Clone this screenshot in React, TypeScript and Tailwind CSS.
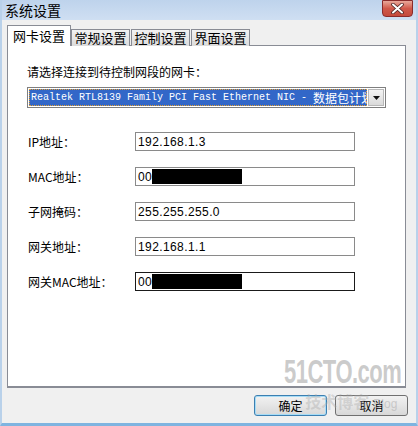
import React from "react";

const CJK = "font-['Noto_Sans_CJK_SC','Liberation_Sans',sans-serif]";
const SANS = "font-['Liberation_Sans',sans-serif]";
const MONO = "font-['Liberation_Mono','Noto_Sans_CJK_SC',monospace]";

function Row({ label, value, mask, dark }: { label: string; value: string; mask?: boolean; dark?: boolean }) {
  return (
    <div className="flex items-center h-[19px]">
      <div className={`w-[107px] text-[12px] text-black leading-none ${CJK}`}>{label}</div>
      <div
        className={`relative w-[220px] h-[19px] bg-white border flex items-center pl-[2px] text-[12px] text-black tracking-[0.4px] ${SANS} ${dark ? "border-[#1a1a1a]" : "border-[#8a8a8a]"}`}
      >
        {value}
        {mask && <div className="absolute top-[1px] bottom-[1px] left-[16px] w-[90px] bg-black" />}
      </div>
    </div>
  );
}

function Tab({ label, first }: { label: string; first?: boolean }) {
  return (
    <div
      className={`h-[17px] w-[59px] bg-gradient-to-b from-[#f2f2f2] to-[#dcdcdc] border border-[#898c95] border-b-0 flex items-center justify-center text-[13px] ${CJK} ${first ? "" : "ml-[1px]"}`}
    >
      {label}
    </div>
  );
}

export default function App() {
  return (
    <div className="relative w-[418px] h-[426px] bg-[#f0f0f0] flex flex-col overflow-hidden border-l-2 border-r-2 border-[#b9d1ea] border-b-[3px] border-b-[#7fb4e0]">
      {/* Title bar */}
      <div className="h-[20px] bg-gradient-to-b from-[#bed3ec] to-[#cfdff2] flex items-start justify-between shrink-0">
        <div className={`pl-[3px] pt-[1px] text-[14px] leading-[18px] text-black ${CJK}`}>系统设置</div>
        <div className="mr-[3px] w-[31px] h-[17px] rounded-b-[4px] border border-[#8a2b2b] bg-gradient-to-b from-[#e8a89b] via-[#d0584a] to-[#c44a3c] flex items-center justify-center">
          <svg width="13" height="11" viewBox="0 0 13 11">
            <path d="M2 1.5 L11 9.5 M11 1.5 L2 9.5" stroke="#4a2222" strokeWidth="3.6" strokeLinecap="round" />
            <path d="M2 1.5 L11 9.5 M11 1.5 L2 9.5" stroke="#ffffff" strokeWidth="2" strokeLinecap="round" />
          </svg>
        </div>
      </div>

      {/* Body */}
      <div className="flex-1 flex flex-col pl-[5px] pr-[8px] pt-[6px]">
        {/* Tabs */}
        <div className="flex items-end h-[20px] relative z-10">
          <div className={`h-[21px] w-[64px] bg-white border border-[#898c95] border-b-0 flex items-start justify-center pt-[2px] text-[13px] leading-[15px] ${CJK}`}>网卡设置</div>
          <Tab label="常规设置" first />
          <Tab label="控制设置" />
          <Tab label="界面设置" />
        </div>
        {/* Panel */}
        <div className="-mt-[1px] h-[343px] w-[399px] bg-white border border-[#898c95] border-b-2 flex flex-col pl-[19px]">
          <div className={`mt-[19px] text-[12px] leading-[14px] text-black ${CJK}`}>请选择连接到待控制网段的网卡：</div>
          <div className="mt-[8px] w-[359px] h-[21px] border border-[#7f7f7f] bg-white flex">
            <div className={`flex-1 m-[1px] bg-[#3267c8] outline-1 outline-dotted outline-[#e6a030] -outline-offset-1 flex items-center overflow-hidden whitespace-pre pl-[2px] text-white text-[10px] ${MONO}`}>
              <span>{"Realtek RTL8139 Family PCI Fast Ethernet NIC - "}</span>
              <span className={`text-[12px] ${CJK}`}>数据包计划程序微型端口</span>
            </div>
            <div className="w-[16px] my-[1px] mr-[1px] bg-gradient-to-b from-[#f4f4f4] to-[#dadada] border border-[#b8b8b8] flex items-center justify-center">
              <svg width="7" height="4" viewBox="0 0 7 4"><path d="M0 0 H7 L3.5 4 Z" fill="#111" /></svg>
            </div>
          </div>
          <div className="mt-[24px] flex flex-col gap-[16px] pl-[1px]">
            <Row label="IP地址：" value="192.168.1.3" />
            <Row label="MAC地址：" value="00:" mask />
            <Row label="子网掩码：" value="255.255.255.0" />
            <Row label="网关地址：" value="192.168.1.1" />
            <Row label="网关MAC地址：" value="00" mask dark />
          </div>
        </div>
        {/* Buttons */}
        <div className="mt-[7px] flex justify-end gap-[8px]">
          <div className={`w-[73px] h-[21px] rounded-[3px] border border-[#3c7fb1] bg-gradient-to-b from-[#f2f2f2] to-[#d8d8d8] shadow-[inset_0_0_0_1px_#a6dcf6] flex items-center justify-center text-[12px] ${CJK}`}>确定</div>
          <div className={`w-[73px] h-[21px] rounded-[3px] border border-[#707070] bg-gradient-to-b from-[#f2f2f2] to-[#d8d8d8] flex items-center justify-center text-[12px] ${CJK}`}>取消</div>
        </div>
      </div>

      {/* Watermark */}
      <div className="absolute left-[282px] top-[356px] pointer-events-none select-none flex flex-col items-end">
        <div className={`text-[22px] font-bold leading-[22px] text-[#a8a8a8]/60 tracking-[-0.5px] scale-y-150 origin-top ${SANS}`}>51CTO.com</div>
        <div className="flex items-baseline gap-[4px] mt-[14px] mr-[4px]">
          <span className={`text-[16px] font-bold leading-[18px] text-[#a8a8a8]/40 ${CJK}`}>技术博客</span>
          <span className={`text-[12px] leading-[12px] text-[#a8a8a8]/50 ${SANS}`}>Blog</span>
        </div>
      </div>
    </div>
  );
}
